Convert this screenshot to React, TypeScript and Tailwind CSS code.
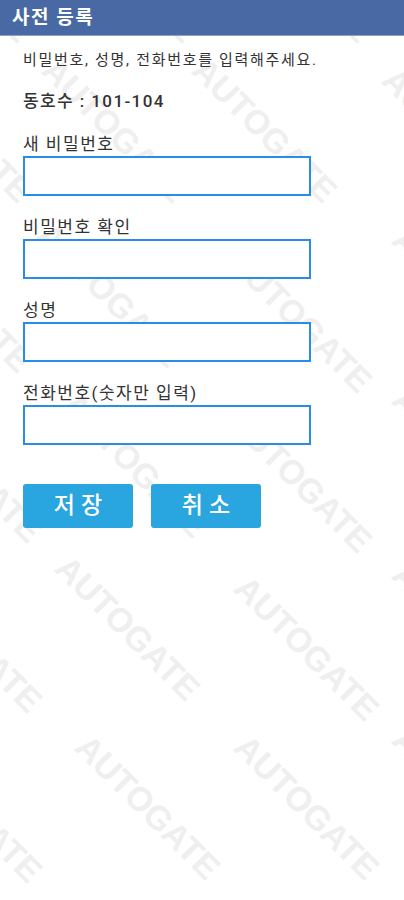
import React from 'react';

const FONT = { fontFamily: 'Roboto, "Noto Sans CJK KR", sans-serif' };

// watermark tiles: [x center, y center]
const MARKS: [number, number][] = [
  [-40, -30], [125, -30], [300, -30], [465, -30],
  [-40, 130], [115, 130], [265, 130], [455, 140],
  [-40, 300], [110, 295], [300, 320], [465, 300],
  [-30, 470], [135, 465], [300, 480], [465, 460],
  [-30, 640], [128, 628], [307, 648], [465, 635],
  [-30, 810], [148, 807], [307, 807], [465, 800],
  [-30, 970], [148, 970], [307, 970], [465, 970],
];

const FIELDS = ['새 비밀번호', '비밀번호 확인', '성명', '전화번호(숫자만 입력)'];

function Watermarks() {
  return (
    <div className="absolute inset-0 overflow-hidden pointer-events-none select-none" aria-hidden>
      {MARKS.map(([x, y], i) => (
        <span
          key={i}
          className="absolute text-[34px] font-bold text-[#efefef] whitespace-nowrap leading-none"
          style={{
            left: x,
            top: y,
            transform: 'translate(-50%, -50%) rotate(45deg)',
            fontFamily: '"Liberation Sans", Arial, sans-serif',
          }}
        >
          AUTOGATE
        </span>
      ))}
    </div>
  );
}

export default function App() {
  return (
    <div className="relative w-[404px] h-[900px] bg-white overflow-hidden text-[#333]" style={FONT}>
      <Watermarks />
      <div className="relative">
        <div className="h-[36px] bg-[#4869a3] border-b border-[#8aa3c8] flex items-center px-[12px]">
          <span className="text-white text-[19px] font-bold leading-none tracking-[1.5px]">사전 등록</span>
        </div>

        <div className="pl-[23px]">
          <p className="mt-[14px] text-[15px] leading-[20px] tracking-[1.7px] text-[#333]">
            비밀번호, 성명, 전화번호를 입력해주세요.
          </p>
          <p className="mt-[20px] text-[17px] leading-[22px] font-medium tracking-[1.4px] text-[#333]">
            동호수 : 101-104
          </p>

          <div className="mt-[21px] flex flex-col gap-[20px]">
            {FIELDS.map((label) => (
              <div key={label} className="flex flex-col">
                <label className="text-[17px] leading-[22px] tracking-[1.5px] text-[#333] mb-[1px]">{label}</label>
                <input
                  type="text"
                  className="w-[288px] h-[40px] border-2 border-[#2a8ce2] bg-white outline-none px-2 text-[16px]"
                />
              </div>
            ))}
          </div>

          <div className="mt-[39px] flex gap-[18px]">
            <button className="w-[110px] h-[44px] rounded-[3px] bg-[#29a5df] text-white text-[23px] font-medium tracking-[6px] pl-[6px]">
              저장
            </button>
            <button className="w-[110px] h-[44px] rounded-[3px] bg-[#29a5df] text-white text-[23px] font-medium tracking-[6px] pl-[6px]">
              취소
            </button>
          </div>
        </div>
      </div>
    </div>
  );
}
